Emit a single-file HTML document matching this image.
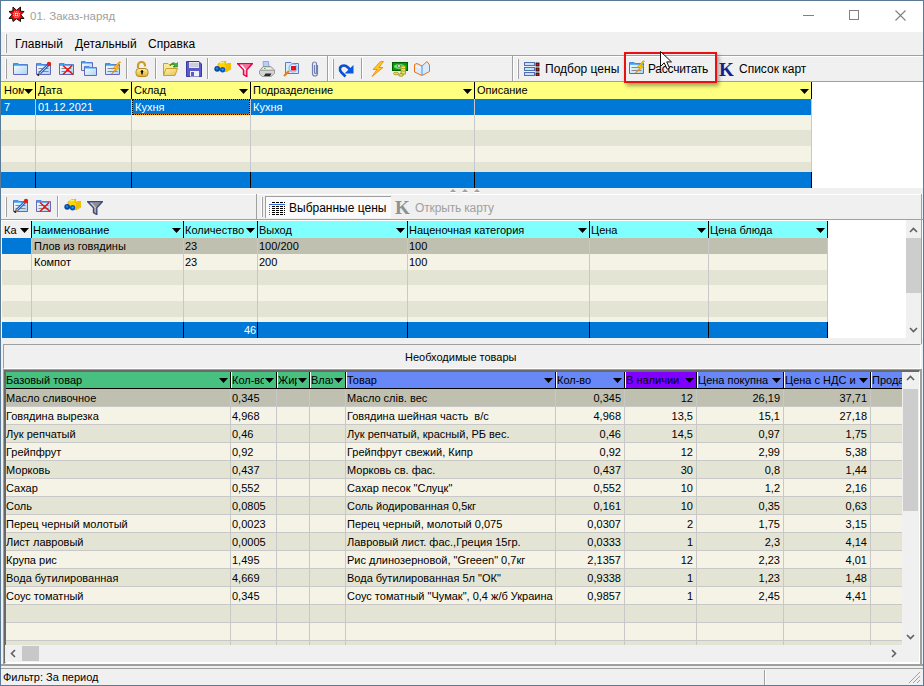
<!DOCTYPE html><html><head><meta charset="utf-8"><style>
*{margin:0;padding:0;box-sizing:border-box}
html,body{width:924px;height:686px;overflow:hidden;background:#f0f0f0;font-family:"Liberation Sans",sans-serif;font-size:11px;color:#000}
div,svg{position:absolute}
.t{white-space:nowrap;line-height:13px}
.m{font-size:12px;line-height:15px}
.g3 .t{letter-spacing:-0.25px}
</style></head><body>
<svg width="0" height="0" style="position:absolute"><defs>
<linearGradient id="fg" x1="0" y1="0" x2="1" y2="1"><stop offset="0" stop-color="#ffffff"/><stop offset="1" stop-color="#a9d3f5"/></linearGradient>
<linearGradient id="yf" x1="0" y1="0" x2="1" y2="1"><stop offset="0" stop-color="#fff3b0"/><stop offset="1" stop-color="#e8c050"/></linearGradient>
<linearGradient id="gold" x1="0" y1="0" x2="0" y2="1"><stop offset="0" stop-color="#fff0a0"/><stop offset="1" stop-color="#e0b030"/></linearGradient>
<linearGradient id="pen" x1="0" y1="0" x2="1" y2="0"><stop offset="0" stop-color="#3070d0"/><stop offset="1" stop-color="#a0d0ff"/></linearGradient>
</defs></svg>
<div style="left:0px;top:0px;width:924px;height:32px;background:#fff"></div>
<div class="t" style="left:30px;top:9px;font-size:11.5px;color:#a0a0a0;line-height:14px">01. Заказ-наряд</div>
<div style="left:803px;top:15px;width:11px;height:1px;background:#808080"></div>
<div style="left:849px;top:10px;width:10px;height:10px;border:1px solid #808080"></div>
<svg style="left:895px;top:10px" width="11" height="11"><path d="M0.5 0.5L10.5 10.5M10.5 0.5L0.5 10.5" stroke="#808080" stroke-width="1.1"/></svg>
<svg style="left:0px;top:0px" width="30" height="30" viewBox="0 0 30 30"><path d="M13 7L16.5 10.3L20.5 7L20.5 11.2L24 11.5L20.8 14.8L24 18.5L20.5 18.5L20.5 21.5L16.5 18.8L13 21.5L12.5 18.3L9 18.5L12.2 14.5L9 11.5L12.8 11Z" fill="#ff0000" stroke="#000" stroke-width="0.9" stroke-linejoin="miter"/><circle cx="16.5" cy="14.5" r="3.2" fill="none" stroke="#fff" stroke-width="0.9" stroke-dasharray="1 1"/><rect x="15.2" y="13.2" width="2.6" height="2.6" fill="none" stroke="#fff" stroke-width="0.9"/></svg>
<div style="left:0px;top:32px;width:924px;height:23px;background:#f0f0f0"></div>
<div style="left:5px;top:34px;width:2px;height:19px;background:#a0a0a0;border-left:1px solid #fff"></div>
<div class="t" style="left:15px;top:37px;font-size:12px;line-height:15px">Главный</div>
<div class="t" style="left:75px;top:37px;font-size:12px;line-height:15px">Детальный</div>
<div class="t" style="left:148px;top:37px;font-size:12px;line-height:15px">Справка</div>
<div style="left:0px;top:55px;width:924px;height:1px;background:#a0a0a0"></div>
<div style="left:0px;top:56px;width:924px;height:1px;background:#fff"></div>
<div style="left:5px;top:59px;width:2px;height:20px;background:#a0a0a0;border-left:1px solid #fff"></div>
<div style="left:0px;top:81px;width:924px;height:1px;background:#a0a0a0"></div>
<div style="left:126px;top:58px;width:1px;height:21px;background:#a0a0a0;border-right:1px solid #fff;width:2px"></div>
<div style="left:155px;top:58px;width:1px;height:21px;background:#a0a0a0;border-right:1px solid #fff;width:2px"></div>
<div style="left:207px;top:58px;width:1px;height:21px;background:#a0a0a0;border-right:1px solid #fff;width:2px"></div>
<div style="left:327px;top:56px;width:1px;height:25px;background:#a0a0a0;border-right:1px solid #fff;width:2px"></div>
<div style="left:332px;top:59px;width:2px;height:20px;background:#a0a0a0;border-left:1px solid #fff"></div>
<div style="left:361px;top:58px;width:1px;height:21px;background:#a0a0a0;border-right:1px solid #fff;width:2px"></div>
<div style="left:512px;top:56px;width:1px;height:25px;background:#a0a0a0;border-right:1px solid #fff;width:2px"></div>
<div style="left:517px;top:59px;width:2px;height:20px;background:#a0a0a0;border-left:1px solid #fff"></div>
<svg style="position:absolute;left:13px;top:61px" width="16" height="15" viewBox="0 0 16 15"><g transform="translate(0,1)"><path d="M0.5 12.5V1.5H5L6 2.5H14.5V12.5Z" fill="url(#fg)" stroke="#6468bc" stroke-width="1"/><path d="M1 1.2H5L6 2.5H14V3.8H1Z" fill="#3d9df0"/></g></svg>
<svg style="position:absolute;left:36px;top:61px" width="16" height="15" viewBox="0 0 16 15"><g transform="translate(0,1)"><path d="M0.5 12.5V1.5H5L6 2.5H14.5V12.5Z" fill="url(#fg)" stroke="#6468bc" stroke-width="1"/><path d="M1 1.2H5L6 2.5H14V3.8H1Z" fill="#3d9df0"/><path d="M2.5 6.5H12.5M2.5 9.5H12.5" stroke="#8a8a8a" stroke-width="1"/><path d="M3.5 11.5L12 3" stroke="#2f66c8" stroke-width="3" stroke-linecap="butt"/><path d="M4 11L11.5 3.5" stroke="#9fd0ff" stroke-width="1"/><path d="M2 13L4.2 10.8" stroke="#c08040" stroke-width="2.4"/><path d="M1.5 13.5L2.8 12.2" stroke="#202020" stroke-width="2"/><circle cx="13" cy="2" r="2.2" fill="#e02010"/></g></svg>
<svg style="position:absolute;left:59px;top:61px" width="16" height="15" viewBox="0 0 16 15"><g transform="translate(0,1)"><path d="M0.5 12.5V1.5H5L6 2.5H14.5V12.5Z" fill="url(#fg)" stroke="#6468bc" stroke-width="1"/><path d="M1 1.2H5L6 2.5H14V3.8H1Z" fill="#3d9df0"/><path d="M2.5 6.5H12.5M2.5 9.5H12.5" stroke="#8a8a8a" stroke-width="1"/><path d="M4 3.5L14 12.5M13 3.5L4 12.5" stroke="#ee1010" stroke-width="1.5"/></g></svg>
<svg style="position:absolute;left:81px;top:61px" width="17" height="16" viewBox="0 0 17 16"><path d="M0.5 9.5V0.5H4L5 1.5H11.5V9.5Z" fill="url(#fg)" stroke="#6468bc"/><path d="M1 0.3H4L5 1.5H11V2.6H1Z" fill="#3d9df0"/><path d="M3.5 14.5V5.5H8L9 6.5H15.5V14.5Z" fill="url(#fg)" stroke="#6468bc"/><path d="M4 5.3H8L9 6.5H15V7.6H4Z" fill="#3d9df0"/></svg>
<svg style="position:absolute;left:105px;top:61px" width="16" height="15" viewBox="0 0 16 15"><g transform="translate(0,1)"><path d="M0.5 12.5V1.5H5L6 2.5H14.5V12.5Z" fill="url(#fg)" stroke="#6468bc" stroke-width="1"/><path d="M1 1.2H5L6 2.5H14V3.8H1Z" fill="#3d9df0"/><path d="M2.5 6.5H12.5M2.5 9.5H12.5" stroke="#8a8a8a" stroke-width="1"/><path d="M14 0L8 6.5H11L6.5 12L15 5H11.5L15.5 0Z" fill="#ffd800" stroke="#e08000" stroke-width="0.7"/></g></svg>
<svg style="position:absolute;left:135px;top:61px" width="14" height="16" viewBox="0 0 14 16"><path d="M3 7V4.5A3.5 3.5 0 0 1 10 4.5V5.5" fill="none" stroke="#c89b2a" stroke-width="2.2"/><rect x="1" y="7.5" width="12" height="8" rx="3" fill="url(#gold)" stroke="#b88a20"/><circle cx="7" cy="10.5" r="1.3" fill="#000"/><path d="M7 11V13.5" stroke="#000" stroke-width="1.3"/></svg>
<svg style="position:absolute;left:163px;top:61px" width="15" height="16" viewBox="0 0 15 16"><path d="M0.5 14.5V2.5H5L6 3.5H11.5V6.5" fill="#f8e89a" stroke="#c8a030"/><path d="M0.5 14.5L3 7.5H14.5L12 14.5Z" fill="url(#yf)" stroke="#c8a030"/><path d="M7 5C8 1.5 11 1 13 3L14.5 1.5V6H10L11.8 4.3C10.5 3 8.5 3 7 5Z" fill="#40b040" stroke="#208020" stroke-width="0.6"/></svg>
<svg style="position:absolute;left:186px;top:61px" width="16" height="16" viewBox="0 0 16 16"><path d="M0.5 0.5H13L15.5 3V15.5H0.5Z" fill="#5a5ac8" stroke="#3a3aa0"/><rect x="3" y="1" width="10" height="6" fill="#e8e8f0"/><path d="M3.5 3H12.5M3.5 5H12.5" stroke="#b0b0c8"/><rect x="4" y="10" width="9" height="5.5" fill="#f0f0f8"/><rect x="5" y="11" width="3" height="4" fill="#5a5ac8"/></svg>
<svg style="position:absolute;left:214px;top:61px" width="17" height="12" viewBox="0 0 17 12"><path d="M4 3L8 0.5H12L11 3.5L14 2.5H17V8L12 11L9 8L4 9Z" fill="#ffd400" stroke="#d0a000" stroke-width="0.6"/><path d="M12 4L16.5 2.8V7.5L12 10.5Z" fill="#f0c000"/><path d="M6 2L10 1" stroke="#fff8a0" stroke-width="1"/><circle cx="3.2" cy="7.8" r="2.9" fill="#0a48a0"/><circle cx="8.6" cy="8.8" r="2.7" fill="#0a58b8"/><circle cx="3" cy="7.5" r="1.2" fill="#2a80e0"/><circle cx="8.6" cy="8.5" r="1.1" fill="#30a0ff"/></svg>
<svg style="position:absolute;left:237px;top:63px" width="16" height="14" viewBox="0 0 16 14"><path d="M0.8 0.8H15.2L9.8 6.8V13.5L6.5 11.5V6.8Z" fill="#ffffff" stroke="#e8004a" stroke-width="1.4" stroke-linejoin="miter"/><path d="M5 1.8H14L9 6.5Z" fill="#e8004a" opacity="0.55"/><path d="M8 7V12" stroke="#e8004a" stroke-width="1" opacity="0.6"/></svg>
<svg style="position:absolute;left:259px;top:61px" width="17" height="16" viewBox="0 0 17 16"><path d="M4 0.5H9.5L10 5.5H4.5Z" fill="#b8ccff" stroke="#8098e0" stroke-width="0.8"/><path d="M0.5 10L4 5.5H12L15.5 9V12.5L12 15.5H3.5L0.5 13Z" fill="#d4d4d4" stroke="#8a8a8a" stroke-width="0.8"/><path d="M1 9.5H15" stroke="#a8a8a8" stroke-width="1"/><path d="M4 7.5H12" stroke="#f0f0f0" stroke-width="1"/><path d="M6.5 12.5L12.5 12.5L11 15H5Z" fill="#2a2a2a"/><rect x="5" y="7" width="1.5" height="1" fill="#40c040"/></svg>
<svg style="position:absolute;left:283px;top:61px" width="17" height="16" viewBox="0 0 17 16"><path d="M2.5 1.5H8L9 2.5H15.5V12.5H2.5Z" fill="#d8ecff" stroke="#5c7cc8"/><rect x="8" y="5" width="5" height="4.5" fill="#e81010"/><circle cx="10" cy="7" r="4" fill="none" stroke="#8cb8f0" stroke-width="1.2"/><path d="M1 15L6 10" stroke="#e08020" stroke-width="2.2"/></svg>
<svg style="position:absolute;left:311px;top:61px" width="8" height="16" viewBox="0 0 8 16"><path d="M6.5 4V12.5A2.5 2.5 0 0 1 1.5 12.5V3A2 2 0 0 1 5.5 3V11.5A0.8 0.8 0 0 1 3.5 11.5V4" fill="none" stroke="#7080b0" stroke-width="1.2"/></svg>
<svg style="position:absolute;left:338px;top:62px" width="17" height="16" viewBox="0 0 17 16"><path d="M7.5 14.5L3.5 10.5Q1.5 8.5 2 6Q3 3.5 6 3.5Q8 3.5 10 5.5L12.5 8" fill="none" stroke="#0a50d0" stroke-width="2.6"/><path d="M15.5 3V11.5H6.5Z" fill="#0a58e0"/></svg>
<svg style="position:absolute;left:370px;top:61px" width="15" height="16" viewBox="0 0 15 16"><path d="M10.5 0.5L3 8.5H7L2 15.5L13 6.5H9L13.5 0.5Z" fill="#ffc820" stroke="#f08000" stroke-width="0.8"/></svg>
<svg style="position:absolute;left:392px;top:61px" width="16" height="16" viewBox="0 0 16 16"><rect x="0.5" y="1.5" width="15" height="8" fill="#00a000" stroke="#006000"/><ellipse cx="7.5" cy="5.5" rx="5.5" ry="2.6" fill="#70e070"/><ellipse cx="7" cy="5" rx="1.6" ry="1.4" fill="#f0f0f0" stroke="#404040" stroke-width="0.6"/><rect x="9" y="5" width="4.5" height="8" fill="#e8e070" stroke="#9a9000" stroke-width="0.8"/><path d="M9.5 7.5H13M9.5 10H13" stroke="#9a9000" stroke-width="0.7"/><ellipse cx="4" cy="12.5" rx="2.5" ry="1.3" fill="#e8e070" stroke="#9a9000" stroke-width="0.8"/><ellipse cx="9" cy="14" rx="2.5" ry="1.3" fill="#e8e070" stroke="#9a9000" stroke-width="0.8"/></svg>
<svg style="position:absolute;left:414px;top:61px" width="16" height="16" viewBox="0 0 16 16"><path d="M0.5 3.5L3 2.5L8 5L13 0.5L15.5 4V10.5L8 14.5L0.5 11Z" fill="#d8ecff" stroke="#f07010" stroke-width="1"/><path d="M8 5V14" stroke="#5090e0" stroke-width="1"/><path d="M2 5L6.5 7" stroke="#fff" stroke-width="1"/></svg>
<svg style="position:absolute;left:524px;top:62px" width="16" height="14" viewBox="0 0 16 14"><rect x="0.5" y="0.5" width="10" height="3" fill="#c8e0ff" stroke="#5070b0"/><rect x="0.5" y="5.5" width="10" height="3" fill="#c8e0ff" stroke="#5070b0"/><rect x="0.5" y="10.5" width="10" height="3" fill="#c8e0ff" stroke="#5070b0"/><rect x="12" y="1" width="3" height="3" fill="#e02020" stroke="#000" stroke-width="0.8"/><rect x="12" y="6" width="3" height="3" fill="#e02020" stroke="#000" stroke-width="0.8"/><rect x="12" y="11" width="3" height="3" fill="#e02020" stroke="#000" stroke-width="0.8"/></svg>
<div class="t" style="left:545px;top:62px;font-size:12px;line-height:15px">Подбор цены</div>
<svg style="position:absolute;left:629px;top:60px" width="16" height="15" viewBox="0 0 16 15"><g transform="translate(0,1)"><path d="M0.5 12.5V1.5H5L6 2.5H14.5V12.5Z" fill="url(#fg)" stroke="#6468bc" stroke-width="1"/><path d="M1 1.2H5L6 2.5H14V3.8H1Z" fill="#3d9df0"/><path d="M2.5 6.5H12.5M2.5 9.5H12.5" stroke="#8a8a8a" stroke-width="1"/><path d="M14 0L8 6.5H11L6.5 12L15 5H11.5L15.5 0Z" fill="#ffd800" stroke="#e08000" stroke-width="0.7"/></g></svg>
<div class="t" style="left:648px;top:62px;font-size:12px;line-height:15px;letter-spacing:-0.25px">Рассчитать</div>
<div style="position:absolute;left:719px;top:62px;font-family:'Liberation Serif',serif;font-weight:bold;font-size:19px;line-height:16px;color:#1a2090">K</div>
<div class="t" style="left:739px;top:62px;font-size:12px;line-height:15px">Список карт</div>
<div style="left:624px;top:52px;width:93px;height:31px;z-index:10;border:2.5px solid #e81010;box-shadow:2px 3px 4px rgba(0,0,0,0.35)"></div>
<svg style="z-index:11;left:660px;top:51px" width="13" height="20" viewBox="0 0 13 20"><path d="M0.5 0.5V15.5L4.2 11.8L7.2 18.2L9.6 17.2L6.7 10.9H11.5Z" fill="#fff" stroke="#111" stroke-width="1" stroke-linejoin="miter"/></svg>
<div style="left:1px;top:82px;width:922px;height:106px;background:#fff"></div>
<div style="left:1px;top:82px;width:810px;height:17px;background:#ffff80"></div>
<div class="t" style="left:4px;top:84px;">Ном</div>
<div style="left:24px;top:82px;width:11px;height:17px;background:#ffff80"></div>
<svg style="position:absolute;left:24px;top:89px" width="9" height="5"><path d="M0 0H9L4.5 5Z" fill="#000"/></svg>
<div style="left:35px;top:82px;width:1px;height:17px;background:#000"></div>
<div class="t" style="left:38px;top:84px;">Дата</div>
<div style="left:120px;top:82px;width:11px;height:17px;background:#ffff80"></div>
<svg style="position:absolute;left:120px;top:89px" width="9" height="5"><path d="M0 0H9L4.5 5Z" fill="#000"/></svg>
<div style="left:131px;top:82px;width:1px;height:17px;background:#000"></div>
<div class="t" style="left:134px;top:84px;">Склад</div>
<div style="left:239px;top:82px;width:11px;height:17px;background:#ffff80"></div>
<svg style="position:absolute;left:239px;top:89px" width="9" height="5"><path d="M0 0H9L4.5 5Z" fill="#000"/></svg>
<div style="left:250px;top:82px;width:1px;height:17px;background:#000"></div>
<div class="t" style="left:253px;top:84px;">Подразделение</div>
<div style="left:463px;top:82px;width:11px;height:17px;background:#ffff80"></div>
<svg style="position:absolute;left:463px;top:89px" width="9" height="5"><path d="M0 0H9L4.5 5Z" fill="#000"/></svg>
<div style="left:474px;top:82px;width:1px;height:17px;background:#000"></div>
<div class="t" style="left:477px;top:84px;">Описание</div>
<div style="left:800px;top:82px;width:11px;height:17px;background:#ffff80"></div>
<svg style="position:absolute;left:800px;top:89px" width="9" height="5"><path d="M0 0H9L4.5 5Z" fill="#000"/></svg>
<div style="left:811px;top:82px;width:1px;height:17px;background:#000"></div>
<div style="left:1px;top:99px;width:810px;height:16px;background:#0078d7"></div>
<div style="left:1px;top:115px;width:810px;height:15px;background:#f5f2e6"></div>
<div style="left:1px;top:130px;width:810px;height:16px;background:#e4e4d4"></div>
<div style="left:1px;top:146px;width:810px;height:16px;background:#f5f2e6"></div>
<div style="left:1px;top:162px;width:810px;height:10px;background:#e4e4d4"></div>
<div style="left:35px;top:99px;width:1px;height:73px;background:#c8c8c8"></div>
<div style="left:131px;top:99px;width:1px;height:73px;background:#c8c8c8"></div>
<div style="left:250px;top:99px;width:1px;height:73px;background:#c8c8c8"></div>
<div style="left:474px;top:99px;width:1px;height:73px;background:#c8c8c8"></div>
<div style="left:811px;top:99px;width:1px;height:73px;background:#c8c8c8"></div>
<div class="t" style="left:4px;top:101px;color:#fff">7</div>
<div class="t" style="left:38px;top:101px;color:#fff">01.12.2021</div>
<div style="left:132px;top:99px;width:118px;height:16px;border:1px solid #ff8000"></div>
<div style="left:132px;top:99px;width:118px;height:16px;border:1px dotted #000"></div>
<div class="t" style="left:135px;top:101px;color:#fff">Кухня</div>
<div class="t" style="left:253px;top:101px;color:#fff">Кухня</div>
<div style="left:1px;top:172px;width:810px;height:16px;background:#0078d7"></div>
<div style="left:35px;top:172px;width:1px;height:16px;background:#000"></div>
<div style="left:131px;top:172px;width:1px;height:16px;background:#000"></div>
<div style="left:250px;top:172px;width:1px;height:16px;background:#000"></div>
<div style="left:474px;top:172px;width:1px;height:16px;background:#000"></div>
<div style="left:811px;top:172px;width:1px;height:16px;background:#000"></div>
<div style="left:0px;top:188px;width:924px;height:6px;background:#f0f0f0"></div>
<svg style="left:450px;top:189px" width="6" height="4"><path d="M0 3H6L3 0Z" fill="#a0a0a0"/><path d="M0 3.5H6" stroke="#fff" stroke-width="1"/></svg>
<svg style="left:462px;top:189px" width="6" height="4"><path d="M0 3H6L3 0Z" fill="#a0a0a0"/><path d="M0 3.5H6" stroke="#fff" stroke-width="1"/></svg>
<svg style="left:474px;top:189px" width="6" height="4"><path d="M0 3H6L3 0Z" fill="#a0a0a0"/><path d="M0 3.5H6" stroke="#fff" stroke-width="1"/></svg>
<div style="left:0px;top:194px;width:924px;height:1px;background:#fff"></div>
<div style="left:5px;top:197px;width:2px;height:20px;background:#a0a0a0;border-left:1px solid #fff"></div>
<div style="left:256px;top:194px;width:1px;height:25px;background:#a0a0a0"></div>
<div style="left:261px;top:197px;width:2px;height:20px;background:#a0a0a0;border-left:1px solid #fff"></div>
<div style="left:265px;top:196px;width:126px;height:22px;background:#fafafa;border-top:1px solid #a0a0a0;border-left:1px solid #a0a0a0"></div>
<div class="t" style="left:289px;top:201px;font-size:12px;line-height:15px">Выбранные цены</div>
<div class="t" style="left:415px;top:201px;font-size:12px;line-height:15px;color:#a0a0a0;letter-spacing:-0.15px">Открыть карту</div>
<div style="left:0px;top:219px;width:924px;height:1px;background:#a0a0a0"></div>
<svg style="position:absolute;left:13px;top:198px" width="16" height="15" viewBox="0 0 16 15"><g transform="translate(0,1)"><path d="M0.5 12.5V1.5H5L6 2.5H14.5V12.5Z" fill="url(#fg)" stroke="#6468bc" stroke-width="1"/><path d="M1 1.2H5L6 2.5H14V3.8H1Z" fill="#3d9df0"/><path d="M2.5 6.5H12.5M2.5 9.5H12.5" stroke="#8a8a8a" stroke-width="1"/><path d="M3.5 11.5L12 3" stroke="#2f66c8" stroke-width="3" stroke-linecap="butt"/><path d="M4 11L11.5 3.5" stroke="#9fd0ff" stroke-width="1"/><path d="M2 13L4.2 10.8" stroke="#c08040" stroke-width="2.4"/><path d="M1.5 13.5L2.8 12.2" stroke="#202020" stroke-width="2"/><circle cx="13" cy="2" r="2.2" fill="#e02010"/></g></svg>
<svg style="position:absolute;left:36px;top:198px" width="16" height="15" viewBox="0 0 16 15"><g transform="translate(0,1)"><path d="M0.5 12.5V1.5H5L6 2.5H14.5V12.5Z" fill="url(#fg)" stroke="#6468bc" stroke-width="1"/><path d="M1 1.2H5L6 2.5H14V3.8H1Z" fill="#3d9df0"/><path d="M2.5 6.5H12.5M2.5 9.5H12.5" stroke="#8a8a8a" stroke-width="1"/><path d="M4 3.5L14 12.5M13 3.5L4 12.5" stroke="#ee1010" stroke-width="1.5"/></g></svg>
<div style="left:57px;top:196px;width:1px;height:21px;background:#a0a0a0;border-right:1px solid #fff;width:2px"></div>
<svg style="position:absolute;left:64px;top:199px" width="17" height="12" viewBox="0 0 17 12"><path d="M4 3L8 0.5H12L11 3.5L14 2.5H17V8L12 11L9 8L4 9Z" fill="#ffd400" stroke="#d0a000" stroke-width="0.6"/><path d="M12 4L16.5 2.8V7.5L12 10.5Z" fill="#f0c000"/><path d="M6 2L10 1" stroke="#fff8a0" stroke-width="1"/><circle cx="3.2" cy="7.8" r="2.9" fill="#0a48a0"/><circle cx="8.6" cy="8.8" r="2.7" fill="#0a58b8"/><circle cx="3" cy="7.5" r="1.2" fill="#2a80e0"/><circle cx="8.6" cy="8.5" r="1.1" fill="#30a0ff"/></svg>
<svg style="position:absolute;left:87px;top:201px" width="16" height="14" viewBox="0 0 16 14"><path d="M0.8 0.8H15.2L9.8 6.8V13.5L6.5 11.5V6.8Z" fill="#c8c8c8" stroke="#404880" stroke-width="1.4" stroke-linejoin="miter"/><path d="M5 1.8H14L9 6.5Z" fill="#606060" opacity="0.55"/><path d="M8 7V12" stroke="#606060" stroke-width="1" opacity="0.6"/></svg>
<svg style="position:absolute;left:269px;top:200px" width="16" height="16" viewBox="0 0 16 16"><path d="M3 2.5H16" stroke="#000" stroke-width="1" stroke-dasharray="3 1"/><path d="M0 4.5H16" stroke="#2a6ae0" stroke-width="1"/><path d="M0.5 6V15" stroke="#2a6ae0" stroke-width="1" stroke-dasharray="1 1"/><path d="M3 6.5H16" stroke="#000" stroke-width="1" stroke-dasharray="3 1"/><path d="M3 8.5H16" stroke="#000" stroke-width="1" stroke-dasharray="3 1"/><path d="M3 10.5H16" stroke="#000" stroke-width="1" stroke-dasharray="3 1"/><path d="M3 12.5H16" stroke="#000" stroke-width="1" stroke-dasharray="3 1"/><path d="M3 14.5H16" stroke="#000" stroke-width="1" stroke-dasharray="3 1"/></svg>
<div style="position:absolute;left:395px;top:200px;font-family:'Liberation Serif',serif;font-weight:bold;font-size:19px;line-height:16px;color:#909090">K</div>
<div style="left:1px;top:220px;width:922px;height:118px;background:#fff"></div>
<div style="left:2px;top:221px;width:29px;height:17px;background:#f0f0f0"></div>
<div style="left:32px;top:221px;width:795px;height:17px;background:#80ffff"></div>
<div class="t" style="left:4px;top:224px;">Ка</div>
<div style="left:20px;top:221px;width:11px;height:17px;background:#f0f0f0"></div>
<svg style="position:absolute;left:20px;top:228px" width="9" height="5"><path d="M0 0H9L4.5 5Z" fill="#000"/></svg>
<div style="left:31px;top:221px;width:1px;height:17px;background:#000"></div>
<div class="t" style="left:33px;top:224px;">Наименование</div>
<div style="left:172px;top:221px;width:11px;height:17px;background:#80ffff"></div>
<svg style="position:absolute;left:172px;top:228px" width="9" height="5"><path d="M0 0H9L4.5 5Z" fill="#000"/></svg>
<div style="left:183px;top:221px;width:1px;height:17px;background:#000"></div>
<div class="t" style="left:185px;top:224px;">Количество</div>
<div style="left:246px;top:221px;width:11px;height:17px;background:#80ffff"></div>
<svg style="position:absolute;left:246px;top:228px" width="9" height="5"><path d="M0 0H9L4.5 5Z" fill="#000"/></svg>
<div style="left:257px;top:221px;width:1px;height:17px;background:#000"></div>
<div class="t" style="left:259px;top:224px;">Выход</div>
<div style="left:396px;top:221px;width:11px;height:17px;background:#80ffff"></div>
<svg style="position:absolute;left:396px;top:228px" width="9" height="5"><path d="M0 0H9L4.5 5Z" fill="#000"/></svg>
<div style="left:407px;top:221px;width:1px;height:17px;background:#000"></div>
<div class="t" style="left:409px;top:224px;">Наценочная категория</div>
<div style="left:578px;top:221px;width:11px;height:17px;background:#80ffff"></div>
<svg style="position:absolute;left:578px;top:228px" width="9" height="5"><path d="M0 0H9L4.5 5Z" fill="#000"/></svg>
<div style="left:589px;top:221px;width:1px;height:17px;background:#000"></div>
<div class="t" style="left:591px;top:224px;">Цена</div>
<div style="left:697px;top:221px;width:11px;height:17px;background:#80ffff"></div>
<svg style="position:absolute;left:697px;top:228px" width="9" height="5"><path d="M0 0H9L4.5 5Z" fill="#000"/></svg>
<div style="left:708px;top:221px;width:1px;height:17px;background:#000"></div>
<div class="t" style="left:710px;top:224px;">Цена блюда</div>
<div style="left:816px;top:221px;width:11px;height:17px;background:#80ffff"></div>
<svg style="position:absolute;left:816px;top:228px" width="9" height="5"><path d="M0 0H9L4.5 5Z" fill="#000"/></svg>
<div style="left:827px;top:221px;width:1px;height:17px;background:#000"></div>
<div style="left:2px;top:238px;width:825px;height:16px;background:#c0c0b0"></div>
<div style="left:2px;top:254px;width:825px;height:16px;background:#f5f2e6"></div>
<div style="left:2px;top:270px;width:825px;height:15px;background:#e4e4d4"></div>
<div style="left:2px;top:285px;width:825px;height:16px;background:#f5f2e6"></div>
<div style="left:2px;top:301px;width:825px;height:16px;background:#e4e4d4"></div>
<div style="left:2px;top:317px;width:825px;height:5px;background:#f5f2e6"></div>
<div style="left:2px;top:238px;width:29px;height:16px;background:#0078d7"></div>
<div style="left:31px;top:238px;width:1px;height:84px;background:#c8c8c8"></div>
<div style="left:183px;top:238px;width:1px;height:84px;background:#c8c8c8"></div>
<div style="left:257px;top:238px;width:1px;height:84px;background:#c8c8c8"></div>
<div style="left:407px;top:238px;width:1px;height:84px;background:#c8c8c8"></div>
<div style="left:589px;top:238px;width:1px;height:84px;background:#c8c8c8"></div>
<div style="left:708px;top:238px;width:1px;height:84px;background:#c8c8c8"></div>
<div style="left:827px;top:238px;width:1px;height:84px;background:#c8c8c8"></div>
<div class="t" style="left:34px;top:240px;">Плов из говядины</div>
<div class="t" style="left:185px;top:240px;">23</div>
<div class="t" style="left:259px;top:240px;">100/200</div>
<div class="t" style="left:409px;top:240px;">100</div>
<div class="t" style="left:34px;top:256px;">Компот</div>
<div class="t" style="left:185px;top:256px;">23</div>
<div class="t" style="left:259px;top:256px;">200</div>
<div class="t" style="left:409px;top:256px;">100</div>
<div style="left:2px;top:322px;width:825px;height:16px;background:#0078d7"></div>
<div style="left:31px;top:322px;width:1px;height:16px;background:#000"></div>
<div style="left:183px;top:322px;width:1px;height:16px;background:#000"></div>
<div style="left:257px;top:322px;width:1px;height:16px;background:#000"></div>
<div style="left:407px;top:322px;width:1px;height:16px;background:#000"></div>
<div style="left:589px;top:322px;width:1px;height:16px;background:#000"></div>
<div style="left:708px;top:322px;width:1px;height:16px;background:#000"></div>
<div style="left:827px;top:322px;width:1px;height:16px;background:#000"></div>
<div class="t" style="left:244px;top:324px;color:#fff">46</div>
<div style="left:906px;top:220px;width:15px;height:118px;background:#f0f0f0"></div>
<div style="left:906px;top:238px;width:15px;height:55px;background:#cdcdcd"></div>
<svg style="left:909px;top:227px" width="9" height="6"><path d="M1 5L4.5 1.5L8 5" fill="none" stroke="#606060" stroke-width="1.6"/></svg>
<svg style="left:909px;top:327px" width="9" height="6"><path d="M1 1L4.5 4.5L8 1" fill="none" stroke="#606060" stroke-width="1.6"/></svg>
<div style="left:921px;top:194px;width:1px;height:150px;background:#a0a0a0"></div>
<div style="left:3px;top:344px;width:918px;height:25px;border-top:1px solid #a0a0a0;border-left:1px solid #a0a0a0;border-bottom:1px solid #fff;border-right:1px solid #fff"></div>
<div class="t" style="left:405px;top:351px;">Необходимые товары</div>
<div style="left:3px;top:369px;width:919px;height:297px;border-top:1px solid #a0a0a0;border-left:1px solid #a0a0a0;border-bottom:2px solid #a0a0a0;border-right:2px solid #a0a0a0;background:#fff"></div>
<div style="left:4px;top:370px;width:916px;height:294px;border-top:2px solid #696969;border-left:2px solid #696969;border-bottom:2px solid #fff;border-right:1px solid #fff;background:#fff"></div>
<div style="left:6px;top:372px;width:224px;height:16px;background:#48c080;overflow:hidden"><div class="t" style="left:0px;top:2px">Базовый товар</div></div>
<div style="left:218px;top:372px;width:12px;height:16px;background:#48c080"></div>
<svg style="position:absolute;left:219px;top:378px" width="9" height="5"><path d="M0 0H9L4.5 5Z" fill="#000"/></svg>
<div style="left:230px;top:372px;width:1px;height:16px;background:#000"></div>
<div style="left:231px;top:372px;width:1px;height:16px;background:#fff"></div>
<div style="left:232px;top:372px;width:44px;height:16px;background:#48c080;overflow:hidden"><div class="t" style="left:0px;top:2px">Кол-во</div></div>
<div style="left:264px;top:372px;width:12px;height:16px;background:#48c080"></div>
<svg style="position:absolute;left:265px;top:378px" width="9" height="5"><path d="M0 0H9L4.5 5Z" fill="#000"/></svg>
<div style="left:276px;top:372px;width:1px;height:16px;background:#000"></div>
<div style="left:277px;top:372px;width:1px;height:16px;background:#fff"></div>
<div style="left:278px;top:372px;width:31px;height:16px;background:#48c080;overflow:hidden"><div class="t" style="left:0px;top:2px">Жир</div></div>
<div style="left:297px;top:372px;width:12px;height:16px;background:#48c080"></div>
<svg style="position:absolute;left:298px;top:378px" width="9" height="5"><path d="M0 0H9L4.5 5Z" fill="#000"/></svg>
<div style="left:309px;top:372px;width:1px;height:16px;background:#000"></div>
<div style="left:310px;top:372px;width:1px;height:16px;background:#fff"></div>
<div style="left:311px;top:372px;width:34px;height:16px;background:#48c080;overflow:hidden"><div class="t" style="left:0px;top:2px">Влаж</div></div>
<div style="left:333px;top:372px;width:12px;height:16px;background:#48c080"></div>
<svg style="position:absolute;left:334px;top:378px" width="9" height="5"><path d="M0 0H9L4.5 5Z" fill="#000"/></svg>
<div style="left:345px;top:372px;width:1px;height:16px;background:#000"></div>
<div style="left:346px;top:372px;width:1px;height:16px;background:#fff"></div>
<div style="left:347px;top:372px;width:208px;height:16px;background:#6888f8;overflow:hidden"><div class="t" style="left:0px;top:2px">Товар</div></div>
<div style="left:543px;top:372px;width:12px;height:16px;background:#6888f8"></div>
<svg style="position:absolute;left:544px;top:378px" width="9" height="5"><path d="M0 0H9L4.5 5Z" fill="#000"/></svg>
<div style="left:555px;top:372px;width:1px;height:16px;background:#000"></div>
<div style="left:556px;top:372px;width:1px;height:16px;background:#fff"></div>
<div style="left:557px;top:372px;width:67px;height:16px;background:#6888f8;overflow:hidden"><div class="t" style="left:0px;top:2px">Кол-во</div></div>
<div style="left:612px;top:372px;width:12px;height:16px;background:#6888f8"></div>
<svg style="position:absolute;left:613px;top:378px" width="9" height="5"><path d="M0 0H9L4.5 5Z" fill="#000"/></svg>
<div style="left:624px;top:372px;width:1px;height:16px;background:#000"></div>
<div style="left:625px;top:372px;width:1px;height:16px;background:#fff"></div>
<div style="left:626px;top:372px;width:70px;height:16px;background:#8000ff;overflow:hidden"><div class="t" style="left:0px;top:2px">В наличии</div></div>
<div style="left:684px;top:372px;width:12px;height:16px;background:#8000ff"></div>
<svg style="position:absolute;left:685px;top:378px" width="9" height="5"><path d="M0 0H9L4.5 5Z" fill="#000"/></svg>
<div style="left:696px;top:372px;width:1px;height:16px;background:#000"></div>
<div style="left:697px;top:372px;width:1px;height:16px;background:#fff"></div>
<div style="left:698px;top:372px;width:85px;height:16px;background:#6888f8;overflow:hidden"><div class="t" style="left:0px;top:2px">Цена покупна</div></div>
<div style="left:771px;top:372px;width:12px;height:16px;background:#6888f8"></div>
<svg style="position:absolute;left:772px;top:378px" width="9" height="5"><path d="M0 0H9L4.5 5Z" fill="#000"/></svg>
<div style="left:783px;top:372px;width:1px;height:16px;background:#000"></div>
<div style="left:784px;top:372px;width:1px;height:16px;background:#fff"></div>
<div style="left:785px;top:372px;width:85px;height:16px;background:#6888f8;overflow:hidden"><div class="t" style="left:0px;top:2px">Цена с НДС и</div></div>
<div style="left:858px;top:372px;width:12px;height:16px;background:#6888f8"></div>
<svg style="position:absolute;left:859px;top:378px" width="9" height="5"><path d="M0 0H9L4.5 5Z" fill="#000"/></svg>
<div style="left:870px;top:372px;width:1px;height:16px;background:#000"></div>
<div style="left:871px;top:372px;width:1px;height:16px;background:#fff"></div>
<div style="left:872px;top:372px;width:30px;height:16px;background:#6888f8;overflow:hidden"><div class="t" style="left:0px;top:2px">Продажа</div></div>
<div style="left:6px;top:388px;width:896px;height:1px;background:#000"></div>
<div style="left:6px;top:389px;width:896px;height:17px;background:#c0c0b0"></div>
<div style="left:6px;top:406px;width:896px;height:1px;background:#c8c8c8"></div>
<div style="left:6px;top:407px;width:896px;height:17px;background:#f5f2e6"></div>
<div style="left:6px;top:424px;width:896px;height:1px;background:#c8c8c8"></div>
<div style="left:6px;top:425px;width:896px;height:17px;background:#e4e4d4"></div>
<div style="left:6px;top:442px;width:896px;height:1px;background:#c8c8c8"></div>
<div style="left:6px;top:443px;width:896px;height:17px;background:#f5f2e6"></div>
<div style="left:6px;top:460px;width:896px;height:1px;background:#c8c8c8"></div>
<div style="left:6px;top:461px;width:896px;height:17px;background:#e4e4d4"></div>
<div style="left:6px;top:478px;width:896px;height:1px;background:#c8c8c8"></div>
<div style="left:6px;top:479px;width:896px;height:17px;background:#f5f2e6"></div>
<div style="left:6px;top:496px;width:896px;height:1px;background:#c8c8c8"></div>
<div style="left:6px;top:497px;width:896px;height:17px;background:#e4e4d4"></div>
<div style="left:6px;top:514px;width:896px;height:1px;background:#c8c8c8"></div>
<div style="left:6px;top:515px;width:896px;height:17px;background:#f5f2e6"></div>
<div style="left:6px;top:532px;width:896px;height:1px;background:#c8c8c8"></div>
<div style="left:6px;top:533px;width:896px;height:17px;background:#e4e4d4"></div>
<div style="left:6px;top:550px;width:896px;height:1px;background:#c8c8c8"></div>
<div style="left:6px;top:551px;width:896px;height:17px;background:#f5f2e6"></div>
<div style="left:6px;top:568px;width:896px;height:1px;background:#c8c8c8"></div>
<div style="left:6px;top:569px;width:896px;height:17px;background:#e4e4d4"></div>
<div style="left:6px;top:586px;width:896px;height:1px;background:#c8c8c8"></div>
<div style="left:6px;top:587px;width:896px;height:17px;background:#f5f2e6"></div>
<div style="left:6px;top:604px;width:896px;height:1px;background:#c8c8c8"></div>
<div style="left:6px;top:605px;width:896px;height:17px;background:#e4e4d4"></div>
<div style="left:6px;top:622px;width:896px;height:1px;background:#c8c8c8"></div>
<div style="left:6px;top:623px;width:896px;height:17px;background:#f5f2e6"></div>
<div style="left:6px;top:640px;width:896px;height:1px;background:#c8c8c8"></div>
<div style="left:6px;top:641px;width:896px;height:4px;background:#e4e4d4"></div>
<div style="left:230px;top:389px;width:1px;height:256px;background:#c8c8c8"></div>
<div style="left:276px;top:389px;width:1px;height:256px;background:#c8c8c8"></div>
<div style="left:309px;top:389px;width:1px;height:256px;background:#c8c8c8"></div>
<div style="left:345px;top:389px;width:1px;height:256px;background:#c8c8c8"></div>
<div style="left:555px;top:389px;width:1px;height:256px;background:#c8c8c8"></div>
<div style="left:624px;top:389px;width:1px;height:256px;background:#c8c8c8"></div>
<div style="left:696px;top:389px;width:1px;height:256px;background:#c8c8c8"></div>
<div style="left:783px;top:389px;width:1px;height:256px;background:#c8c8c8"></div>
<div style="left:870px;top:389px;width:1px;height:256px;background:#c8c8c8"></div>
<div class="t" style="left:6px;top:392px;">Масло сливочное</div>
<div class="t" style="left:232px;top:392px;">0,345</div>
<div class="t" style="left:347px;top:392px;width:208px;overflow:hidden">Масло слів. вес</div>
<div class="t" style="left:541px;top:392px;width:80px;text-align:right">0,345</div>
<div class="t" style="left:613px;top:392px;width:80px;text-align:right">12</div>
<div class="t" style="left:700px;top:392px;width:80px;text-align:right">26,19</div>
<div class="t" style="left:787px;top:392px;width:80px;text-align:right">37,71</div>
<div class="t" style="left:6px;top:410px;">Говядина вырезка</div>
<div class="t" style="left:232px;top:410px;">4,968</div>
<div class="t" style="left:347px;top:410px;width:208px;overflow:hidden">Говядина шейная часть&nbsp; в/с</div>
<div class="t" style="left:541px;top:410px;width:80px;text-align:right">4,968</div>
<div class="t" style="left:613px;top:410px;width:80px;text-align:right">13,5</div>
<div class="t" style="left:700px;top:410px;width:80px;text-align:right">15,1</div>
<div class="t" style="left:787px;top:410px;width:80px;text-align:right">27,18</div>
<div class="t" style="left:6px;top:428px;">Лук репчатый</div>
<div class="t" style="left:232px;top:428px;">0,46</div>
<div class="t" style="left:347px;top:428px;width:208px;overflow:hidden">Лук репчатый, красный, РБ вес.</div>
<div class="t" style="left:541px;top:428px;width:80px;text-align:right">0,46</div>
<div class="t" style="left:613px;top:428px;width:80px;text-align:right">14,5</div>
<div class="t" style="left:700px;top:428px;width:80px;text-align:right">0,97</div>
<div class="t" style="left:787px;top:428px;width:80px;text-align:right">1,75</div>
<div class="t" style="left:6px;top:446px;">Грейпфрут</div>
<div class="t" style="left:232px;top:446px;">0,92</div>
<div class="t" style="left:347px;top:446px;width:208px;overflow:hidden">Грейпфрут свежий, Кипр</div>
<div class="t" style="left:541px;top:446px;width:80px;text-align:right">0,92</div>
<div class="t" style="left:613px;top:446px;width:80px;text-align:right">12</div>
<div class="t" style="left:700px;top:446px;width:80px;text-align:right">2,99</div>
<div class="t" style="left:787px;top:446px;width:80px;text-align:right">5,38</div>
<div class="t" style="left:6px;top:464px;">Морковь</div>
<div class="t" style="left:232px;top:464px;">0,437</div>
<div class="t" style="left:347px;top:464px;width:208px;overflow:hidden">Морковь св. фас.</div>
<div class="t" style="left:541px;top:464px;width:80px;text-align:right">0,437</div>
<div class="t" style="left:613px;top:464px;width:80px;text-align:right">30</div>
<div class="t" style="left:700px;top:464px;width:80px;text-align:right">0,8</div>
<div class="t" style="left:787px;top:464px;width:80px;text-align:right">1,44</div>
<div class="t" style="left:6px;top:482px;">Сахар</div>
<div class="t" style="left:232px;top:482px;">0,552</div>
<div class="t" style="left:347px;top:482px;width:208px;overflow:hidden">Сахар песок "Слуцк"</div>
<div class="t" style="left:541px;top:482px;width:80px;text-align:right">0,552</div>
<div class="t" style="left:613px;top:482px;width:80px;text-align:right">10</div>
<div class="t" style="left:700px;top:482px;width:80px;text-align:right">1,2</div>
<div class="t" style="left:787px;top:482px;width:80px;text-align:right">2,16</div>
<div class="t" style="left:6px;top:500px;">Соль</div>
<div class="t" style="left:232px;top:500px;">0,0805</div>
<div class="t" style="left:347px;top:500px;width:208px;overflow:hidden">Соль йодированная 0,5кг</div>
<div class="t" style="left:541px;top:500px;width:80px;text-align:right">0,161</div>
<div class="t" style="left:613px;top:500px;width:80px;text-align:right">10</div>
<div class="t" style="left:700px;top:500px;width:80px;text-align:right">0,35</div>
<div class="t" style="left:787px;top:500px;width:80px;text-align:right">0,63</div>
<div class="t" style="left:6px;top:518px;">Перец черный молотый</div>
<div class="t" style="left:232px;top:518px;">0,0023</div>
<div class="t" style="left:347px;top:518px;width:208px;overflow:hidden">Перец черный, молотый 0,075</div>
<div class="t" style="left:541px;top:518px;width:80px;text-align:right">0,0307</div>
<div class="t" style="left:613px;top:518px;width:80px;text-align:right">2</div>
<div class="t" style="left:700px;top:518px;width:80px;text-align:right">1,75</div>
<div class="t" style="left:787px;top:518px;width:80px;text-align:right">3,15</div>
<div class="t" style="left:6px;top:536px;">Лист лавровый</div>
<div class="t" style="left:232px;top:536px;">0,0005</div>
<div class="t" style="left:347px;top:536px;width:208px;overflow:hidden">Лавровый лист. фас.,Греция 15гр.</div>
<div class="t" style="left:541px;top:536px;width:80px;text-align:right">0,0333</div>
<div class="t" style="left:613px;top:536px;width:80px;text-align:right">1</div>
<div class="t" style="left:700px;top:536px;width:80px;text-align:right">2,3</div>
<div class="t" style="left:787px;top:536px;width:80px;text-align:right">4,14</div>
<div class="t" style="left:6px;top:554px;">Крупа рис</div>
<div class="t" style="left:232px;top:554px;">1,495</div>
<div class="t" style="left:347px;top:554px;width:208px;overflow:hidden">Рис длинозерновой, "Greeen" 0,7кг</div>
<div class="t" style="left:541px;top:554px;width:80px;text-align:right">2,1357</div>
<div class="t" style="left:613px;top:554px;width:80px;text-align:right">12</div>
<div class="t" style="left:700px;top:554px;width:80px;text-align:right">2,23</div>
<div class="t" style="left:787px;top:554px;width:80px;text-align:right">4,01</div>
<div class="t" style="left:6px;top:572px;">Вода бутилированная</div>
<div class="t" style="left:232px;top:572px;">4,669</div>
<div class="t" style="left:347px;top:572px;width:208px;overflow:hidden">Вода бутилированная 5л "ОК"</div>
<div class="t" style="left:541px;top:572px;width:80px;text-align:right">0,9338</div>
<div class="t" style="left:613px;top:572px;width:80px;text-align:right">1</div>
<div class="t" style="left:700px;top:572px;width:80px;text-align:right">1,23</div>
<div class="t" style="left:787px;top:572px;width:80px;text-align:right">1,48</div>
<div class="t" style="left:6px;top:590px;">Соус томатный</div>
<div class="t" style="left:232px;top:590px;">0,345</div>
<div class="t" style="left:347px;top:590px;width:208px;overflow:hidden">Соус томатный "Чумак", 0,4 ж/б Украина</div>
<div class="t" style="left:541px;top:590px;width:80px;text-align:right">0,9857</div>
<div class="t" style="left:613px;top:590px;width:80px;text-align:right">1</div>
<div class="t" style="left:700px;top:590px;width:80px;text-align:right">2,45</div>
<div class="t" style="left:787px;top:590px;width:80px;text-align:right">4,41</div>
<div style="left:902px;top:372px;width:17px;height:273px;background:#f0f0f0"></div>
<svg style="left:906px;top:375px" width="9" height="6"><path d="M1 5L4.5 1.5L8 5" fill="none" stroke="#606060" stroke-width="1.6"/></svg>
<div style="left:903px;top:389px;width:15px;height:122px;background:#cdcdcd"></div>
<svg style="left:906px;top:634px" width="9" height="6"><path d="M1 1L4.5 4.5L8 1" fill="none" stroke="#606060" stroke-width="1.6"/></svg>
<div style="left:5px;top:645px;width:914px;height:17px;background:#f0f0f0"></div>
<svg style="left:10px;top:649px" width="6" height="9"><path d="M5 1L1.5 4.5L5 8" fill="none" stroke="#606060" stroke-width="1.6"/></svg>
<div style="left:22px;top:646px;width:17px;height:15px;background:#c8c8c8"></div>
<svg style="left:891px;top:649px" width="6" height="9"><path d="M1 1L4.5 4.5L1 8" fill="none" stroke="#606060" stroke-width="1.6"/></svg>
<div style="left:1px;top:664px;width:922px;height:2px;background:#a0a0a0"></div>
<div style="left:1px;top:666px;width:922px;height:2px;background:#f0f0f0"></div>
<div style="left:0px;top:668px;width:924px;height:1px;background:#a0a0a0"></div>
<div style="left:0px;top:669px;width:924px;height:17px;background:#f0f0f0"></div>
<div class="t" style="left:3px;top:671px;">Фильтр: За период</div>
<div style="left:764px;top:670px;width:2px;height:15px;background:#a0a0a0;border-right:1px solid #fff"></div>
<svg style="left:908px;top:671px" width="13" height="13"><path d="M12 1L1 12M12 5L5 12M12 9L9 12" stroke="#a0a0a0" stroke-width="1"/></svg>
<div style="left:0px;top:0px;width:924px;height:1px;background:#5a7b98"></div>
<div style="left:0px;top:0px;width:1px;height:686px;background:#5a7b98"></div>
<div style="left:923px;top:0px;width:1px;height:686px;background:#5a7b98"></div>
<div style="left:0px;top:685px;width:924px;height:1px;background:#5a7b98"></div>
</body></html>
